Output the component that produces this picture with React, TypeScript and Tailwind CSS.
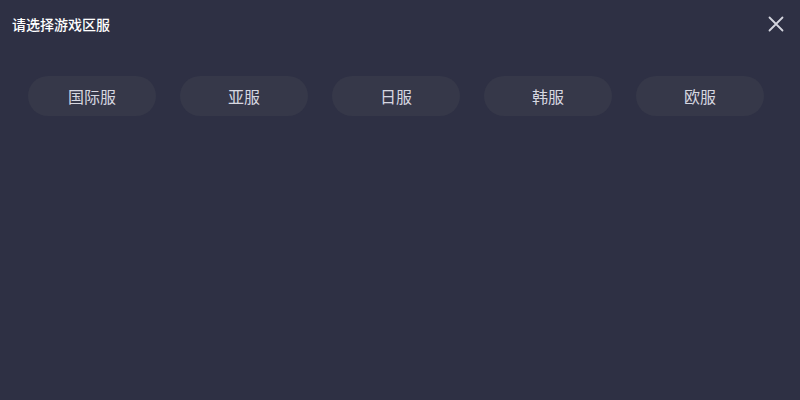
import React from 'react';

const regions = ['国际服', '亚服', '日服', '韩服', '欧服'];

const App: React.FC = () => {
  return (
    <div
      className="w-[800px] h-[400px] bg-[#2e3044] flex flex-col"
      style={{ fontFamily: '"Noto Sans CJK SC", "Noto Sans", sans-serif' }}
    >
      <div className="flex items-center justify-between h-[48px] pl-3 pr-4">
        <h1 className="text-[14px] font-medium text-white leading-none">请选择游戏区服</h1>
        <button className="text-[#d4d5de] p-0">
          <svg width="16" height="16" viewBox="0 0 16 16" fill="none" stroke="currentColor" strokeWidth="1.8" strokeLinecap="round">
            <path d="M1.5 1.5 L14.5 14.5 M14.5 1.5 L1.5 14.5" />
          </svg>
        </button>
      </div>

      {/* 区服列表 */}
      <div className="flex gap-6 pl-[28px] pt-[28px]">
        {regions.map((name) => (
          <button
            key={name}
            className="w-[128px] h-[40px] rounded-full bg-[#363849] text-[16px] text-[#d6d7e0] flex items-center justify-center"
          >
            {name}
          </button>
        ))}
      </div>
    </div>
  );
};

export default App;
